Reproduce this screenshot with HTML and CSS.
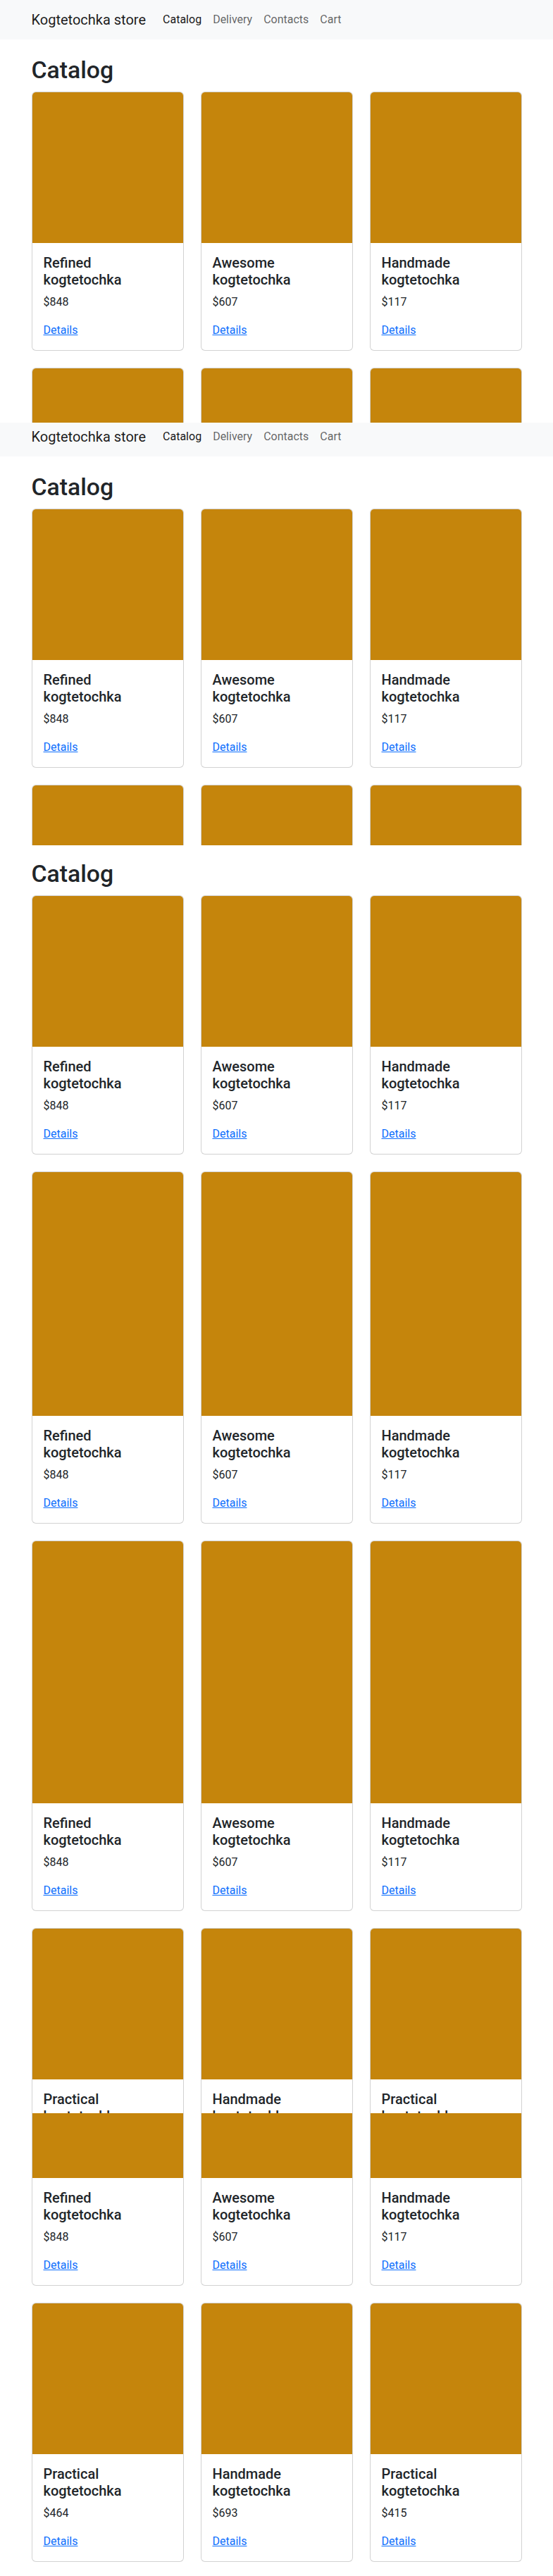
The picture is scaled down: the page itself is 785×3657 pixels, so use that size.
FILE: index.html
```html
<!DOCTYPE html>
<html lang="en">
<head>
<meta charset="utf-8">
<title>Kogtetochka store</title>
<link rel="stylesheet" href="styles.css">
</head>
<body>

<!-- shot 1 -->
<section class="shot">
  <div class="page from-0">
    <nav class="navbar"><div class="bar"><a class="brand" href="#">Kogtetochka store</a><ul class="nav"><li><a class="active" href="#">Catalog</a></li><li><a href="#">Delivery</a></li><li><a href="#">Contacts</a></li><li><a href="#">Cart</a></li></ul></div></nav>
    <main class="content">
      <h1>Catalog</h1>
      <div class="grid">
        <div class="card"><div class="card-img"></div><div class="card-body"><h5 class="card-title">Refined kogtetochka</h5><p class="price">$848</p><a class="details" href="#">Details</a></div></div>
        <div class="card"><div class="card-img"></div><div class="card-body"><h5 class="card-title">Awesome kogtetochka</h5><p class="price">$607</p><a class="details" href="#">Details</a></div></div>
        <div class="card"><div class="card-img"></div><div class="card-body"><h5 class="card-title">Handmade kogtetochka</h5><p class="price">$117</p><a class="details" href="#">Details</a></div></div>
        <div class="card"><div class="card-img"></div><div class="card-body"><h5 class="card-title">Refined kogtetochka</h5><p class="price">$848</p><a class="details" href="#">Details</a></div></div>
        <div class="card"><div class="card-img"></div><div class="card-body"><h5 class="card-title">Awesome kogtetochka</h5><p class="price">$607</p><a class="details" href="#">Details</a></div></div>
        <div class="card"><div class="card-img"></div><div class="card-body"><h5 class="card-title">Handmade kogtetochka</h5><p class="price">$117</p><a class="details" href="#">Details</a></div></div>
      </div>
    </main>
  </div>
</section>

<!-- shot 2 -->
<section class="shot">
  <div class="page from-8">
    <nav class="navbar"><div class="bar"><a class="brand" href="#">Kogtetochka store</a><ul class="nav"><li><a class="active" href="#">Catalog</a></li><li><a href="#">Delivery</a></li><li><a href="#">Contacts</a></li><li><a href="#">Cart</a></li></ul></div></nav>
    <main class="content">
      <h1>Catalog</h1>
      <div class="grid">
        <div class="card"><div class="card-img"></div><div class="card-body"><h5 class="card-title">Refined kogtetochka</h5><p class="price">$848</p><a class="details" href="#">Details</a></div></div>
        <div class="card"><div class="card-img"></div><div class="card-body"><h5 class="card-title">Awesome kogtetochka</h5><p class="price">$607</p><a class="details" href="#">Details</a></div></div>
        <div class="card"><div class="card-img"></div><div class="card-body"><h5 class="card-title">Handmade kogtetochka</h5><p class="price">$117</p><a class="details" href="#">Details</a></div></div>
        <div class="card"><div class="card-img"></div><div class="card-body"><h5 class="card-title">Refined kogtetochka</h5><p class="price">$848</p><a class="details" href="#">Details</a></div></div>
        <div class="card"><div class="card-img"></div><div class="card-body"><h5 class="card-title">Awesome kogtetochka</h5><p class="price">$607</p><a class="details" href="#">Details</a></div></div>
        <div class="card"><div class="card-img"></div><div class="card-body"><h5 class="card-title">Handmade kogtetochka</h5><p class="price">$117</p><a class="details" href="#">Details</a></div></div>
      </div>
    </main>
  </div>
</section>

<!-- shot 3 -->
<section class="shot">
  <div class="page from-59">
    <nav class="navbar"><div class="bar"><a class="brand" href="#">Kogtetochka store</a><ul class="nav"><li><a class="active" href="#">Catalog</a></li><li><a href="#">Delivery</a></li><li><a href="#">Contacts</a></li><li><a href="#">Cart</a></li></ul></div></nav>
    <main class="content">
      <h1>Catalog</h1>
      <div class="grid">
        <div class="card"><div class="card-img"></div><div class="card-body"><h5 class="card-title">Refined kogtetochka</h5><p class="price">$848</p><a class="details" href="#">Details</a></div></div>
        <div class="card"><div class="card-img"></div><div class="card-body"><h5 class="card-title">Awesome kogtetochka</h5><p class="price">$607</p><a class="details" href="#">Details</a></div></div>
        <div class="card"><div class="card-img"></div><div class="card-body"><h5 class="card-title">Handmade kogtetochka</h5><p class="price">$117</p><a class="details" href="#">Details</a></div></div>
        <div class="card"><div class="card-img"></div><div class="card-body"><h5 class="card-title">Refined kogtetochka</h5><p class="price">$848</p><a class="details" href="#">Details</a></div></div>
        <div class="card"><div class="card-img"></div><div class="card-body"><h5 class="card-title">Awesome kogtetochka</h5><p class="price">$607</p><a class="details" href="#">Details</a></div></div>
        <div class="card"><div class="card-img"></div><div class="card-body"><h5 class="card-title">Handmade kogtetochka</h5><p class="price">$117</p><a class="details" href="#">Details</a></div></div>
      </div>
    </main>
  </div>
</section>

<!-- shot 4 -->
<section class="shot">
  <div class="page from-527">
    <nav class="navbar"><div class="bar"><a class="brand" href="#">Kogtetochka store</a><ul class="nav"><li><a class="active" href="#">Catalog</a></li><li><a href="#">Delivery</a></li><li><a href="#">Contacts</a></li><li><a href="#">Cart</a></li></ul></div></nav>
    <main class="content">
      <h1>Catalog</h1>
      <div class="grid">
        <div class="card"><div class="card-img"></div><div class="card-body"><h5 class="card-title">Refined kogtetochka</h5><p class="price">$848</p><a class="details" href="#">Details</a></div></div>
        <div class="card"><div class="card-img"></div><div class="card-body"><h5 class="card-title">Awesome kogtetochka</h5><p class="price">$607</p><a class="details" href="#">Details</a></div></div>
        <div class="card"><div class="card-img"></div><div class="card-body"><h5 class="card-title">Handmade kogtetochka</h5><p class="price">$117</p><a class="details" href="#">Details</a></div></div>
        <div class="card"><div class="card-img"></div><div class="card-body"><h5 class="card-title">Refined kogtetochka</h5><p class="price">$848</p><a class="details" href="#">Details</a></div></div>
        <div class="card"><div class="card-img"></div><div class="card-body"><h5 class="card-title">Awesome kogtetochka</h5><p class="price">$607</p><a class="details" href="#">Details</a></div></div>
        <div class="card"><div class="card-img"></div><div class="card-body"><h5 class="card-title">Handmade kogtetochka</h5><p class="price">$117</p><a class="details" href="#">Details</a></div></div>
        <div class="card"><div class="card-img"></div><div class="card-body"><h5 class="card-title">Refined kogtetochka</h5><p class="price">$848</p><a class="details" href="#">Details</a></div></div>
        <div class="card"><div class="card-img"></div><div class="card-body"><h5 class="card-title">Awesome kogtetochka</h5><p class="price">$607</p><a class="details" href="#">Details</a></div></div>
        <div class="card"><div class="card-img"></div><div class="card-body"><h5 class="card-title">Handmade kogtetochka</h5><p class="price">$117</p><a class="details" href="#">Details</a></div></div>
      </div>
    </main>
  </div>
</section>

<!-- shot 5 -->
<section class="shot">
  <div class="page from-969">
    <nav class="navbar"><div class="bar"><a class="brand" href="#">Kogtetochka store</a><ul class="nav"><li><a class="active" href="#">Catalog</a></li><li><a href="#">Delivery</a></li><li><a href="#">Contacts</a></li><li><a href="#">Cart</a></li></ul></div></nav>
    <main class="content">
      <h1>Catalog</h1>
      <div class="grid">
        <div class="card"><div class="card-img"></div><div class="card-body"><h5 class="card-title">Refined kogtetochka</h5><p class="price">$848</p><a class="details" href="#">Details</a></div></div>
        <div class="card"><div class="card-img"></div><div class="card-body"><h5 class="card-title">Awesome kogtetochka</h5><p class="price">$607</p><a class="details" href="#">Details</a></div></div>
        <div class="card"><div class="card-img"></div><div class="card-body"><h5 class="card-title">Handmade kogtetochka</h5><p class="price">$117</p><a class="details" href="#">Details</a></div></div>
        <div class="card"><div class="card-img"></div><div class="card-body"><h5 class="card-title">Refined kogtetochka</h5><p class="price">$848</p><a class="details" href="#">Details</a></div></div>
        <div class="card"><div class="card-img"></div><div class="card-body"><h5 class="card-title">Awesome kogtetochka</h5><p class="price">$607</p><a class="details" href="#">Details</a></div></div>
        <div class="card"><div class="card-img"></div><div class="card-body"><h5 class="card-title">Handmade kogtetochka</h5><p class="price">$117</p><a class="details" href="#">Details</a></div></div>
        <div class="card"><div class="card-img"></div><div class="card-body"><h5 class="card-title">Refined kogtetochka</h5><p class="price">$848</p><a class="details" href="#">Details</a></div></div>
        <div class="card"><div class="card-img"></div><div class="card-body"><h5 class="card-title">Awesome kogtetochka</h5><p class="price">$607</p><a class="details" href="#">Details</a></div></div>
        <div class="card"><div class="card-img"></div><div class="card-body"><h5 class="card-title">Handmade kogtetochka</h5><p class="price">$117</p><a class="details" href="#">Details</a></div></div>
        <div class="card"><div class="card-img"></div><div class="card-body"><h5 class="card-title">Practical kogtetochka</h5><p class="price">$464</p><a class="details" href="#">Details</a></div></div>
        <div class="card"><div class="card-img"></div><div class="card-body"><h5 class="card-title">Handmade kogtetochka</h5><p class="price">$693</p><a class="details" href="#">Details</a></div></div>
        <div class="card"><div class="card-img"></div><div class="card-body"><h5 class="card-title">Practical kogtetochka</h5><p class="price">$415</p><a class="details" href="#">Details</a></div></div>
      </div>
    </main>
  </div>
</section>

<!-- shot 6 -->
<section class="shot shot-last">
  <div class="page from-1037">
    <nav class="navbar"><div class="bar"><a class="brand" href="#">Kogtetochka store</a><ul class="nav"><li><a class="active" href="#">Catalog</a></li><li><a href="#">Delivery</a></li><li><a href="#">Contacts</a></li><li><a href="#">Cart</a></li></ul></div></nav>
    <main class="content">
      <h1>Catalog</h1>
      <div class="grid">
        <div class="card"><div class="card-img"></div><div class="card-body"><h5 class="card-title">Refined kogtetochka</h5><p class="price">$848</p><a class="details" href="#">Details</a></div></div>
        <div class="card"><div class="card-img"></div><div class="card-body"><h5 class="card-title">Awesome kogtetochka</h5><p class="price">$607</p><a class="details" href="#">Details</a></div></div>
        <div class="card"><div class="card-img"></div><div class="card-body"><h5 class="card-title">Handmade kogtetochka</h5><p class="price">$117</p><a class="details" href="#">Details</a></div></div>
        <div class="card"><div class="card-img"></div><div class="card-body"><h5 class="card-title">Refined kogtetochka</h5><p class="price">$848</p><a class="details" href="#">Details</a></div></div>
        <div class="card"><div class="card-img"></div><div class="card-body"><h5 class="card-title">Awesome kogtetochka</h5><p class="price">$607</p><a class="details" href="#">Details</a></div></div>
        <div class="card"><div class="card-img"></div><div class="card-body"><h5 class="card-title">Handmade kogtetochka</h5><p class="price">$117</p><a class="details" href="#">Details</a></div></div>
        <div class="card"><div class="card-img"></div><div class="card-body"><h5 class="card-title">Refined kogtetochka</h5><p class="price">$848</p><a class="details" href="#">Details</a></div></div>
        <div class="card"><div class="card-img"></div><div class="card-body"><h5 class="card-title">Awesome kogtetochka</h5><p class="price">$607</p><a class="details" href="#">Details</a></div></div>
        <div class="card"><div class="card-img"></div><div class="card-body"><h5 class="card-title">Handmade kogtetochka</h5><p class="price">$117</p><a class="details" href="#">Details</a></div></div>
        <div class="card"><div class="card-img"></div><div class="card-body"><h5 class="card-title">Practical kogtetochka</h5><p class="price">$464</p><a class="details" href="#">Details</a></div></div>
        <div class="card"><div class="card-img"></div><div class="card-body"><h5 class="card-title">Handmade kogtetochka</h5><p class="price">$693</p><a class="details" href="#">Details</a></div></div>
        <div class="card"><div class="card-img"></div><div class="card-body"><h5 class="card-title">Practical kogtetochka</h5><p class="price">$415</p><a class="details" href="#">Details</a></div></div>
      </div>
    </main>
  </div>
</section>

</body>
</html>
```

FILE: styles.css
```css
* {
  box-sizing: border-box;
}

html,
body {
  margin: 0;
  padding: 0;
  background: #ffffff;
}

body {
  width: 785px;
  font-family: Roboto, "Liberation Sans", sans-serif;
  font-size: 16px;
  line-height: 1.5;
  color: #212529;
}

/* each shot is one captured viewport of the same page */
.shot {
  height: 600px;
  overflow: hidden;
  background: #ffffff;
}

.shot-last {
  height: 657px;
}

.from-0 { margin-top: 0; }
.from-8 { margin-top: -8px; }
.from-59 { margin-top: -59px; }
.from-527 { margin-top: -527px; }
.from-969 { margin-top: -969px; }
.from-1037 { margin-top: -1037px; }

/* navbar */
.navbar {
  background: #f8f9fa;
  padding: 8px 0;
}

.bar {
  width: 696px;
  margin: 0 auto;
  display: flex;
  align-items: center;
}

.brand {
  font-size: 20px;
  line-height: 30px;
  padding: 5px 0;
  margin-right: 16px;
  color: rgba(0, 0, 0, 0.9);
  text-decoration: none;
  white-space: nowrap;
}

.nav {
  display: flex;
  list-style: none;
  margin: 0;
  padding: 0;
}

.nav a {
  display: block;
  padding: 8px;
  line-height: 24px;
  color: rgba(0, 0, 0, 0.62);
  text-decoration: none;
}

.nav a.active {
  color: rgba(0, 0, 0, 0.92);
}

/* content */
.content {
  width: 696px;
  margin: 0 auto;
  padding: 24px 0 20px;
}

h1 {
  font-size: 33.775px;
  line-height: 1.2;
  font-weight: 500;
  margin: 0 0 9px;
  color: #212529;
}

.grid {
  display: grid;
  grid-template-columns: repeat(3, 216px);
  gap: 24px;
}

.card {
  display: flex;
  flex-direction: column;
  background: #ffffff;
  border: 1px solid rgba(0, 0, 0, 0.175);
  border-radius: 6px;
}

.card-img {
  height: 214px;
  background: #c5850c;
  border-radius: 5px 5px 0 0;
}

.card-body {
  padding: 16px;
}

.card-title {
  font-size: 20px;
  line-height: 24px;
  font-weight: 500;
  margin: 0 0 8px;
  color: #212529;
}

.price {
  margin: 0 0 16px;
}

.details {
  color: #0d6efd;
  text-decoration: underline;
}
```
